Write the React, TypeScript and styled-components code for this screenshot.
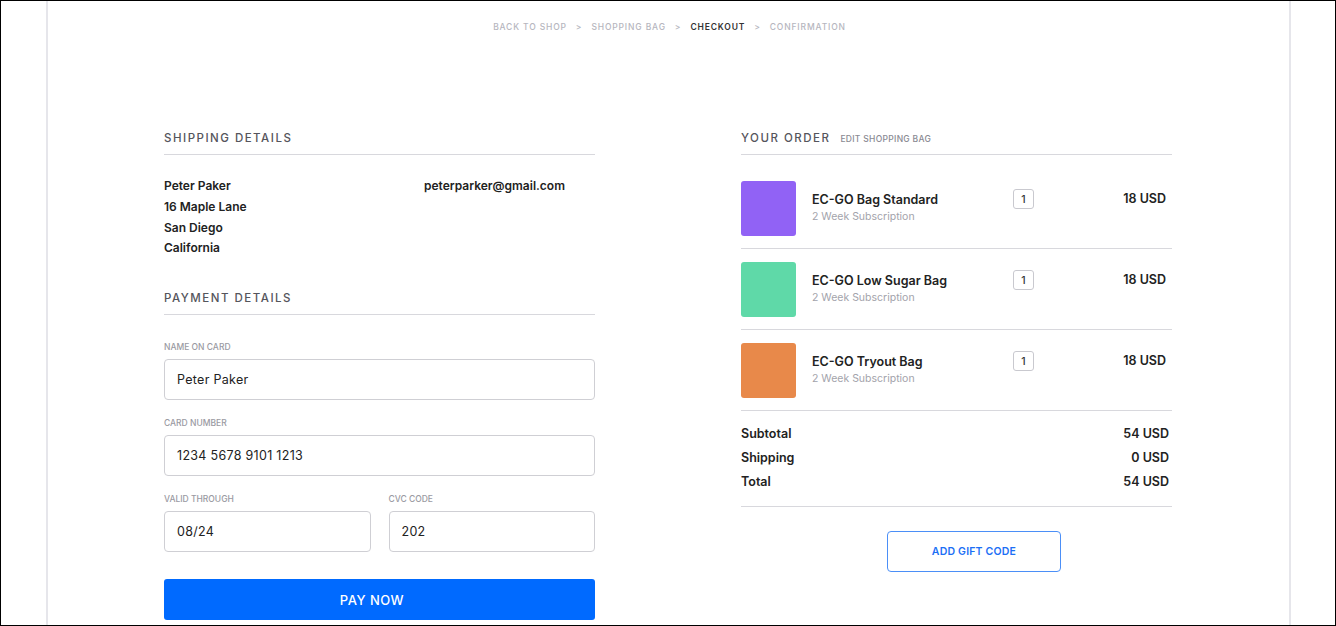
import styled, { createGlobalStyle } from "styled-components";

const GlobalStyle = createGlobalStyle`
  * { box-sizing: border-box; }
  body {
    margin: 0;
    font-family: Inter, "Noto Sans", sans-serif;
    color: #222;
    background: #fff;
  }
`;

const Frame = styled.div`
  height: 626px;
  border: 1px solid #000;
  overflow: hidden;
`;

const Container = styled.div`
  width: 1245px;
  height: 100%;
  margin: 0 auto;
  border-left: 2px solid #e6e6eb;
  border-right: 2px solid #e6e6eb;
`;

const Crumbs = styled.nav`
  display: flex;
  justify-content: center;
  gap: 9px;
  padding: 21px 0 0 3px;
  font-size: 8.5px;
  line-height: 11px;
  letter-spacing: 0.85px;
  font-weight: 500;
  color: #b6b6be;
`;

const Crumb = styled.span<{ $active?: boolean }>`
  color: ${(p) => (p.$active ? "#333" : "#b6b6be")};
  font-weight: ${(p) => (p.$active ? 600 : 500)};
`;

const Main = styled.main`
  display: grid;
  grid-template-columns: 431px 431px;
  column-gap: 146px;
  width: 1008px;
  margin: 97px auto 0;
`;

const Column = styled.section`
  display: flex;
  flex-direction: column;
`;

const Heading = styled.div`
  display: flex;
  align-items: baseline;
  gap: 10px;
  height: 25px;
  padding-bottom: 8px;
  border-bottom: 1px solid #d8d8dd;
  font-size: 11.5px;
  line-height: 16px;
  font-weight: 500;
  letter-spacing: 1.5px;
  color: #55555c;
`;

const HeadingLink = styled.span`
  font-size: 8.5px;
  letter-spacing: 0.3px;
  color: #8a8a92;
`;

const Shipping = styled.div`
  display: grid;
  grid-template-columns: 260px 1fr;
  margin: 21px 0 31px;
  font-size: 12px;
  line-height: 20.8px;
  font-weight: 600;
  color: #222;
`;

const Field = styled.label`
  display: flex;
  flex-direction: column;
  gap: 6px;
`;

const FieldLabel = styled.span`
  font-size: 8.5px;
  line-height: 12px;
  font-weight: 500;
  color: #9a9aa2;
`;

const Input = styled.input`
  height: 41px;
  width: 100%;
  padding: 0 12px;
  border: 1px solid #cfcfd4;
  border-radius: 4px;
  font-family: inherit;
  font-size: 12.5px;
  color: #222;
  letter-spacing: 0.3px;
  outline: none;
`;

const Fields = styled.div`
  display: flex;
  flex-direction: column;
  gap: 17px;
  margin-top: 26px;
`;

const Pair = styled.div`
  display: grid;
  grid-template-columns: 1fr 1fr;
  gap: 18px;
`;

const PayButton = styled.button`
  margin-top: 27px;
  height: 41px;
  padding: 0 15px 0 0;
  border: none;
  border-radius: 3px;
  background: #006aff;
  color: #fff;
  font-family: inherit;
  font-size: 13px;
  font-weight: 500;
  letter-spacing: 0.5px;
`;

const Items = styled.div`
  padding-top: 13px;
`;

const Item = styled.div`
  display: flex;
  align-items: center;
  padding: 13px 6px 12px 0;
  border-bottom: 1px solid #d8d8dd;
`;

const Swatch = styled.div<{ $color: string }>`
  width: 55px;
  height: 55px;
  border-radius: 3px;
  background: ${(p) => p.$color};
  flex: none;
`;

const Info = styled.div`
  flex: 0 0 217px;
  padding-left: 16px;
  margin-bottom: 3px;
  display: flex;
  flex-direction: column;
`;

const ItemName = styled.span`
  font-size: 12.5px;
  line-height: 18px;
  font-weight: 600;
  color: #222;
`;

const ItemSub = styled.span`
  font-size: 10.5px;
  line-height: 15px;
  color: #a3a3ab;
`;

const Qty = styled.span`
  align-self: flex-start;
  margin-top: 8px;
  width: 21px;
  height: 20px;
  display: flex;
  align-items: center;
  justify-content: center;
  border: 1px solid #c9c9cf;
  border-radius: 3px;
  font-size: 10.5px;
  font-weight: 500;
  color: #333;
`;

const Price = styled.span`
  align-self: flex-start;
  margin-top: 9px;
  flex: 1;
  text-align: right;
  font-size: 12.5px;
  line-height: 18px;
  font-weight: 600;
  color: #222;
`;

const Totals = styled.div`
  padding: 11px 3px 12px 0;
  border-bottom: 1px solid #d8d8dd;
`;

const TotalRow = styled.div`
  display: flex;
  justify-content: space-between;
  font-size: 12.5px;
  line-height: 24px;
  font-weight: 600;
  color: #222;
`;

const GiftButton = styled.button`
  margin: 24px 0 0 146px;
  width: 174px;
  height: 41px;
  border: 1px solid #4b8ff7;
  border-radius: 4px;
  background: #fff;
  color: #1c6ff5;
  font-family: inherit;
  font-size: 10.5px;
  font-weight: 600;
  letter-spacing: 0.2px;
  align-self: flex-start;
`;

const items = [
  { name: "EC-GO Bag Standard", color: "#9162f5" },
  { name: "EC-GO Low Sugar Bag", color: "#5fd9a8" },
  { name: "EC-GO Tryout Bag", color: "#e8894a" },
];

export default function App() {
  return (
    <>
      <GlobalStyle />
      <Frame>
        <Container>
          <Crumbs>
            <Crumb>BACK TO SHOP</Crumb>
            <Crumb>&gt;</Crumb>
            <Crumb>SHOPPING BAG</Crumb>
            <Crumb>&gt;</Crumb>
            <Crumb $active>CHECKOUT</Crumb>
            <Crumb>&gt;</Crumb>
            <Crumb>CONFIRMATION</Crumb>
          </Crumbs>

          <Main>
            <Column>
              <Heading>SHIPPING DETAILS</Heading>
              <Shipping>
                <div>
                  Peter Paker
                  <br />
                  16 Maple Lane
                  <br />
                  San Diego
                  <br />
                  California
                </div>
                <div>peterparker@gmail.com</div>
              </Shipping>

              <Heading>PAYMENT DETAILS</Heading>
              <Fields>
                <Field>
                  <FieldLabel>NAME ON CARD</FieldLabel>
                  <Input defaultValue="Peter Paker" />
                </Field>
                <Field>
                  <FieldLabel>CARD NUMBER</FieldLabel>
                  <Input defaultValue="1234 5678 9101 1213" />
                </Field>
                <Pair>
                  <Field>
                    <FieldLabel>VALID THROUGH</FieldLabel>
                    <Input defaultValue="08/24" />
                  </Field>
                  <Field>
                    <FieldLabel>CVC CODE</FieldLabel>
                    <Input defaultValue="202" />
                  </Field>
                </Pair>
              </Fields>
              <PayButton>PAY NOW</PayButton>
            </Column>

            <Column>
              <Heading>
                YOUR ORDER <HeadingLink>EDIT SHOPPING BAG</HeadingLink>
              </Heading>
              <Items>
                {items.map((item) => (
                  <Item key={item.name}>
                    <Swatch $color={item.color} />
                    <Info>
                      <ItemName>{item.name}</ItemName>
                      <ItemSub>2 Week Subscription</ItemSub>
                    </Info>
                    <Qty>1</Qty>
                    <Price>18 USD</Price>
                  </Item>
                ))}
              </Items>
              <Totals>
                <TotalRow>
                  <span>Subtotal</span>
                  <span>54 USD</span>
                </TotalRow>
                <TotalRow>
                  <span>Shipping</span>
                  <span>0 USD</span>
                </TotalRow>
                <TotalRow>
                  <span>Total</span>
                  <span>54 USD</span>
                </TotalRow>
              </Totals>
              <GiftButton>ADD GIFT CODE</GiftButton>
            </Column>
          </Main>
        </Container>
      </Frame>
    </>
  );
}
